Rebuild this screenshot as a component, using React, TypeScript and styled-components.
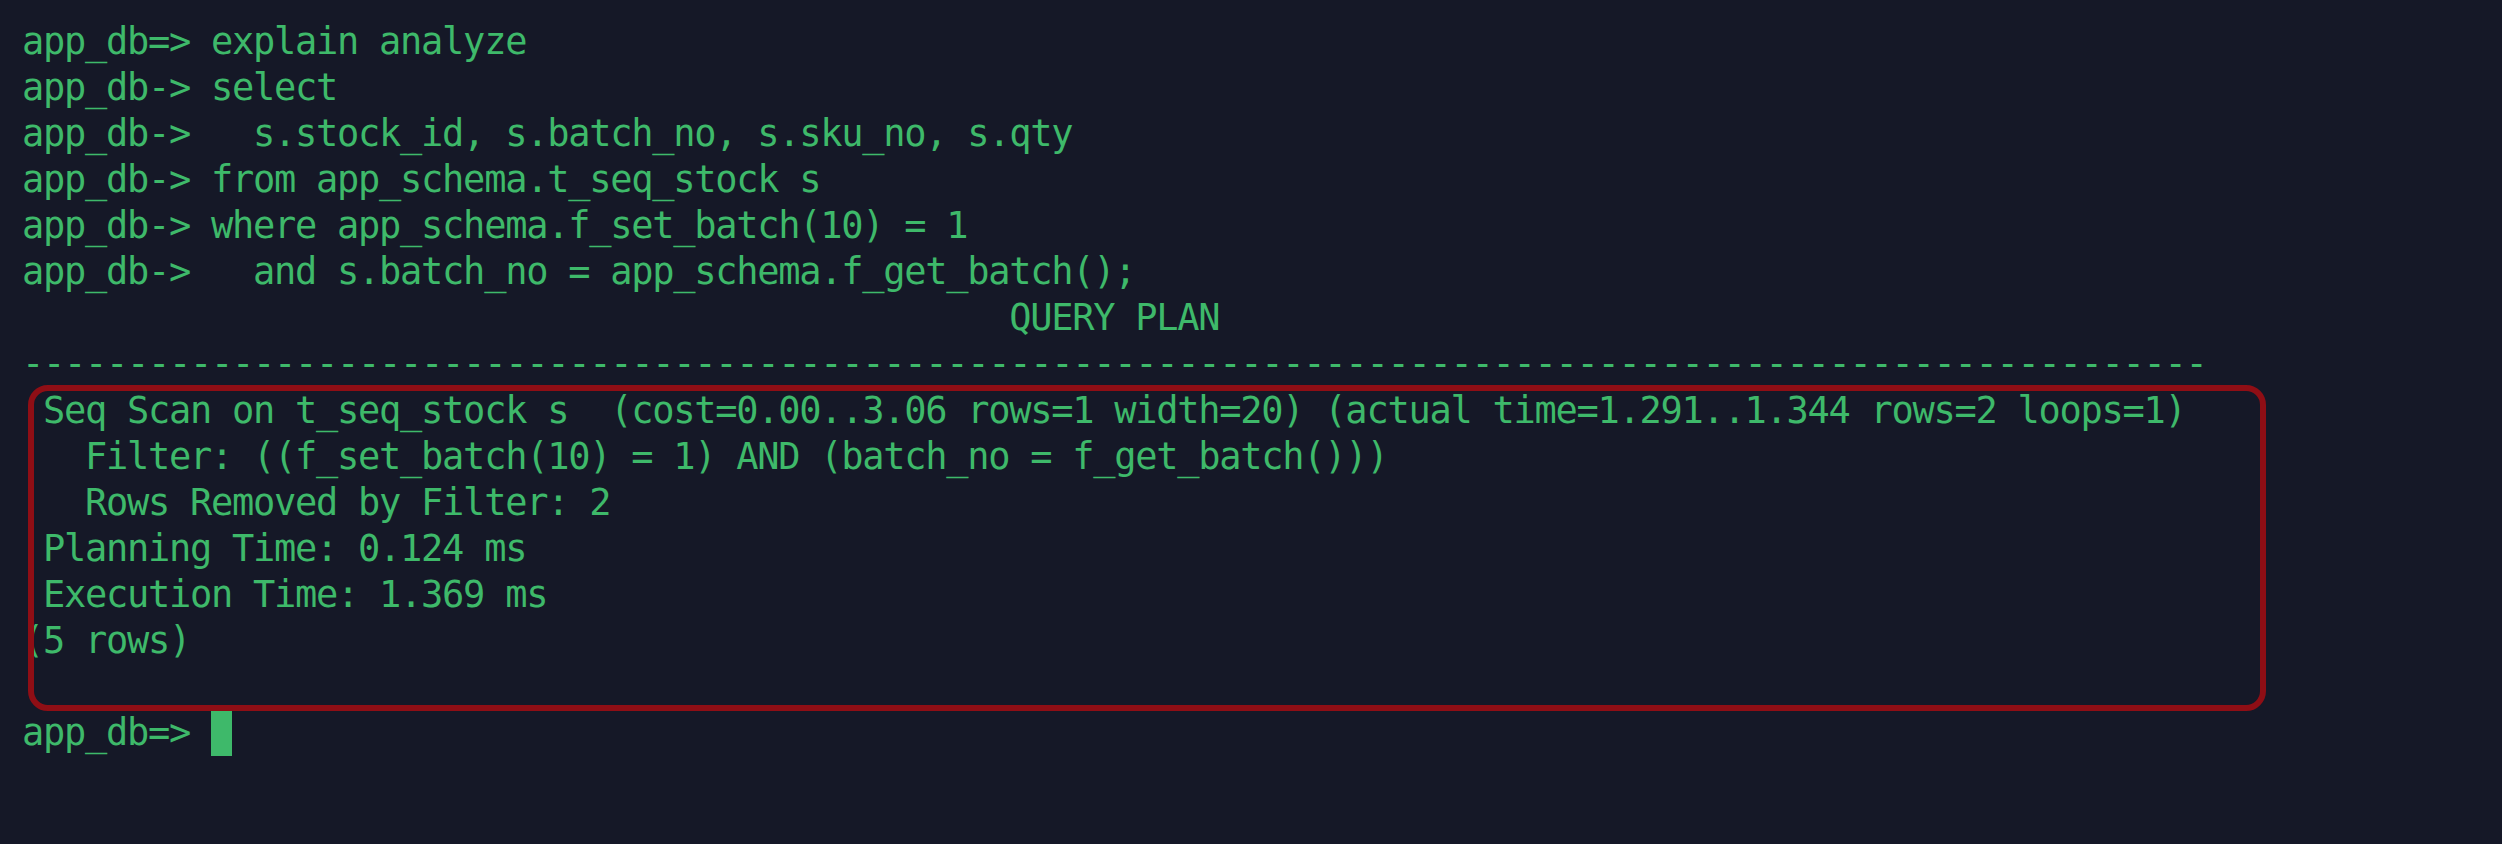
import React from "react";
import styled, { createGlobalStyle } from "styled-components";

const GlobalStyle = createGlobalStyle`
  html, body {
    margin: 0;
    padding: 0;
    background: #151827;
    overflow: hidden;
  }
  #root {
    min-height: 100vh;
  }
`;

const Screen = styled.div`
  position: relative;
  width: 2502px;
  height: 844px;
  background: #151827;
  box-sizing: border-box;
  padding: 19px 0 0 22px;
`;

const Terminal = styled.div`
  display: flex;
  flex-direction: column;
  font-family: "DejaVu Sans Mono", "Liberation Mono", monospace;
  font-size: 37px;
  letter-spacing: -1.27px;
  color: #3eb96a;
`;

const Line = styled.div`
  height: 46.07px;
  line-height: 46.07px;
  white-space: pre;
`;

const Cursor = styled.span`
  display: inline-block;
  width: 21px;
  height: 46px;
  background: #3eb96a;
  vertical-align: top;
`;

const Highlight = styled.div`
  position: absolute;
  left: 28px;
  top: 385px;
  width: 2238px;
  height: 326px;
  box-sizing: border-box;
  border: 6px solid #8f0e15;
  border-radius: 20px;
  pointer-events: none;
`;

const lines: string[] = [
  "app_db=> explain analyze",
  "app_db-> select",
  "app_db->   s.stock_id, s.batch_no, s.sku_no, s.qty",
  "app_db-> from app_schema.t_seq_stock s",
  "app_db-> where app_schema.f_set_batch(10) = 1",
  "app_db->   and s.batch_no = app_schema.f_get_batch();",
  " ".repeat(47) + "QUERY PLAN",
  "-".repeat(104),
  " Seq Scan on t_seq_stock s  (cost=0.00..3.06 rows=1 width=20) (actual time=1.291..1.344 rows=2 loops=1)",
  "   Filter: ((f_set_batch(10) = 1) AND (batch_no = f_get_batch()))",
  "   Rows Removed by Filter: 2",
  " Planning Time: 0.124 ms",
  " Execution Time: 1.369 ms",
  "(5 rows)",
  "",
];

export default function App() {
  return (
    <>
      <GlobalStyle />
      <Screen>
        <Terminal>
          {lines.map((l, i) => (
            <Line key={i}>{l}</Line>
          ))}
          <Line>
            {"app_db=> "}
            <Cursor />
          </Line>
        </Terminal>
        <Highlight />
      </Screen>
    </>
  );
}
